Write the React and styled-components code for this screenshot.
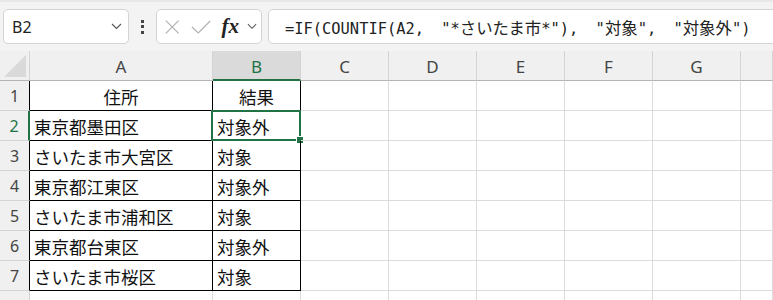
import styled, { createGlobalStyle } from "styled-components";

const GlobalStyle = createGlobalStyle`
  html, body {
    margin: 0;
    padding: 0;
    background: #f3f3f3;
    overflow: hidden;
  }
`;

const columns = ["A", "B", "C", "D", "E", "F", "G", ""];

const rows = [
  { a: "住所", b: "結果", header: true },
  { a: "東京都墨田区", b: "対象外" },
  { a: "さいたま市大宮区", b: "対象" },
  { a: "東京都江東区", b: "対象外" },
  { a: "さいたま市浦和区", b: "対象" },
  { a: "東京都台東区", b: "対象外" },
  { a: "さいたま市桜区", b: "対象" },
];

const App = () => {
  return (
    <>
      <GlobalStyle />
      <Page>
        <Toolbar>
          <NameBox>
            <span>B2</span>
            <Chevron />
          </NameBox>
          <Kebab>
            <i />
            <i />
            <i />
          </Kebab>
          <FxBox>
            <svg width="18" height="16" viewBox="0 0 18 16">
              <path d="M2 1 L16 15 M16 1 L2 15" stroke="#b4b4b4" strokeWidth="1.4" fill="none" />
            </svg>
            <svg width="22" height="16" viewBox="0 0 22 16">
              <path d="M1 8 L8 14.5 L21 1.5" stroke="#b4b4b4" strokeWidth="1.4" fill="none" />
            </svg>
            <FxLabel>fx</FxLabel>
            <Chevron />
          </FxBox>
          <FormulaBox>
            <Formula>
              =IF(COUNTIF(A2, "*<Jp>さいたま市</Jp>*"), "<Jp>対象</Jp>", "<Jp>対象外</Jp>")
            </Formula>
          </FormulaBox>
        </Toolbar>

        <Sheet>
          <Corner>
            <svg width="22" height="22" viewBox="0 0 22 22">
              <polygon points="22,0 22,22 0,22" fill="#d9d9d9" />
            </svg>
          </Corner>
          {columns.map((c) => (
            <ColHead key={c || "h"} $active={c === "B"}>
              {c}
            </ColHead>
          ))}

          {rows.map((r, i) => (
            <Row key={i} r={r} n={i + 1} />
          ))}

          <RowHead $n={8} />
          {columns.map((c) => (
            <Cell key={c || "h"} />
          ))}
        </Sheet>
      </Page>
    </>
  );
};

const Row = ({ r, n }) => {
  const selected = n === 2;
  return (
    <>
      <RowHead $active={selected} $data>
        {n}
      </RowHead>
      <Cell $data $center={r.header}>
        {r.a}
      </Cell>
      <Cell $data $center={r.header}>
        {r.b}
        {selected && (
          <Selection>
            <Handle />
          </Selection>
        )}
      </Cell>
      {columns.slice(2).map((c) => (
        <Cell key={c || "h"} />
      ))}
    </>
  );
};

export default App;

const Chevron = () => (
  <svg width="11" height="7" viewBox="0 0 11 7">
    <path d="M1 1 L5.5 5.5 L10 1" stroke="#555" strokeWidth="1.1" fill="none" />
  </svg>
);

const Page = styled.div`
  width: 773px;
  height: 300px;
  overflow: hidden;
  font-family: "Noto Sans", "Noto Sans CJK JP", sans-serif;
`;

const Toolbar = styled.div`
  display: flex;
  align-items: center;
  height: 51px;
  padding: 0 0 0 3px;
  box-sizing: border-box;
  background: #f3f3f3;
  border-top: 2px solid #e8e8e8;
`;

const Box = styled.div`
  height: 35px;
  box-sizing: border-box;
  background: #fff;
  border: 1px solid #d4d4d4;
  border-radius: 5px;
  display: flex;
  align-items: center;
`;

const NameBox = styled(Box)`
  width: 126px;
  padding: 0 6px 0 8px;
  justify-content: space-between;
  font-size: 16px;
  color: #222;
`;

const Kebab = styled.div`
  width: 27px;
  display: flex;
  flex-direction: column;
  align-items: center;
  gap: 2.5px;

  i {
    display: block;
    width: 3px;
    height: 3px;
    background: #444;
  }
`;

const FxBox = styled(Box)`
  width: 106px;
  padding: 0 4px 0 7px;
  gap: 10px;

  svg:first-child {
    margin-right: 1px;
  }
`;

const FxLabel = styled.span`
  font-family: "Liberation Serif", "DejaVu Serif", serif;
  font-style: italic;
  font-weight: bold;
  font-size: 21px;
  color: #222;
  margin-right: -2px;
`;

const FormulaBox = styled(Box)`
  flex: 1;
  margin-left: 6px;
  margin-right: -10px;
  padding-left: 16px;
`;

const Formula = styled.span`
  font-family: "DejaVu Sans Mono", "Noto Sans CJK JP", monospace;
  font-size: 15.4px;
  word-spacing: 8px;
  color: #222;
  white-space: nowrap;
`;

const Jp = styled.span`
  font-family: "Noto Sans CJK JP", sans-serif;
  font-size: 16.4px;
`;

const Sheet = styled.div`
  display: grid;
  grid-template-columns: 30px 183px repeat(6, 88px) 1fr;
  grid-template-rows: 30px repeat(7, 30px) 30px;
  background: #fff;
`;

const Corner = styled.div`
  background: #f0f0f0;
  border-right: 1px solid #d4d4d4;
  border-bottom: 1px solid #b4b4b4;
  display: flex;
  align-items: flex-end;
  justify-content: flex-end;
  padding: 0 3px 3px 0;
  box-sizing: border-box;
`;

const ColHead = styled.div`
  box-sizing: border-box;
  background: ${(p) => (p.$active ? "#dadada" : "#f0f0f0")};
  border-right: 1px solid #d4d4d4;
  border-bottom: ${(p) => (p.$active ? "2px solid #217346" : "1px solid #b4b4b4")};
  display: flex;
  align-items: center;
  justify-content: center;
  padding-top: 2px;
  font-size: 17px;
  color: ${(p) => (p.$active ? "#217346" : "#444")};
`;

const RowHead = styled.div`
  box-sizing: border-box;
  background: #f0f0f0;
  border-bottom: 1px solid #d4d4d4;
  border-right: ${(p) =>
    p.$active ? "2px solid #217346" : p.$data ? "1px solid #000" : "1px solid #d4d4d4"};
  display: flex;
  align-items: center;
  justify-content: center;
  font-size: 16px;
  color: ${(p) => (p.$active ? "#217346" : "#444")};
`;

const Cell = styled.div`
  position: relative;
  box-sizing: border-box;
  border-right: 1px solid ${(p) => (p.$data ? "#000" : "#dcdcdc")};
  border-bottom: 1px solid ${(p) => (p.$data ? "#000" : "#dcdcdc")};
  display: flex;
  align-items: center;
  justify-content: ${(p) => (p.$center ? "center" : "flex-start")};
  padding: 1px 4px 0 4px;
  font-family: "Noto Sans CJK JP", sans-serif;
  font-size: 17.5px;
  color: #111;
  white-space: nowrap;
`;

const Selection = styled.div`
  position: absolute;
  top: -1px;
  left: -2px;
  right: -1px;
  bottom: -1px;
  border: 2px solid #217346;
  pointer-events: none;
`;

const Handle = styled.div`
  position: absolute;
  right: -4px;
  bottom: -4px;
  width: 6px;
  height: 6px;
  background: #217346;
  outline: 1px solid #fff;
`;
